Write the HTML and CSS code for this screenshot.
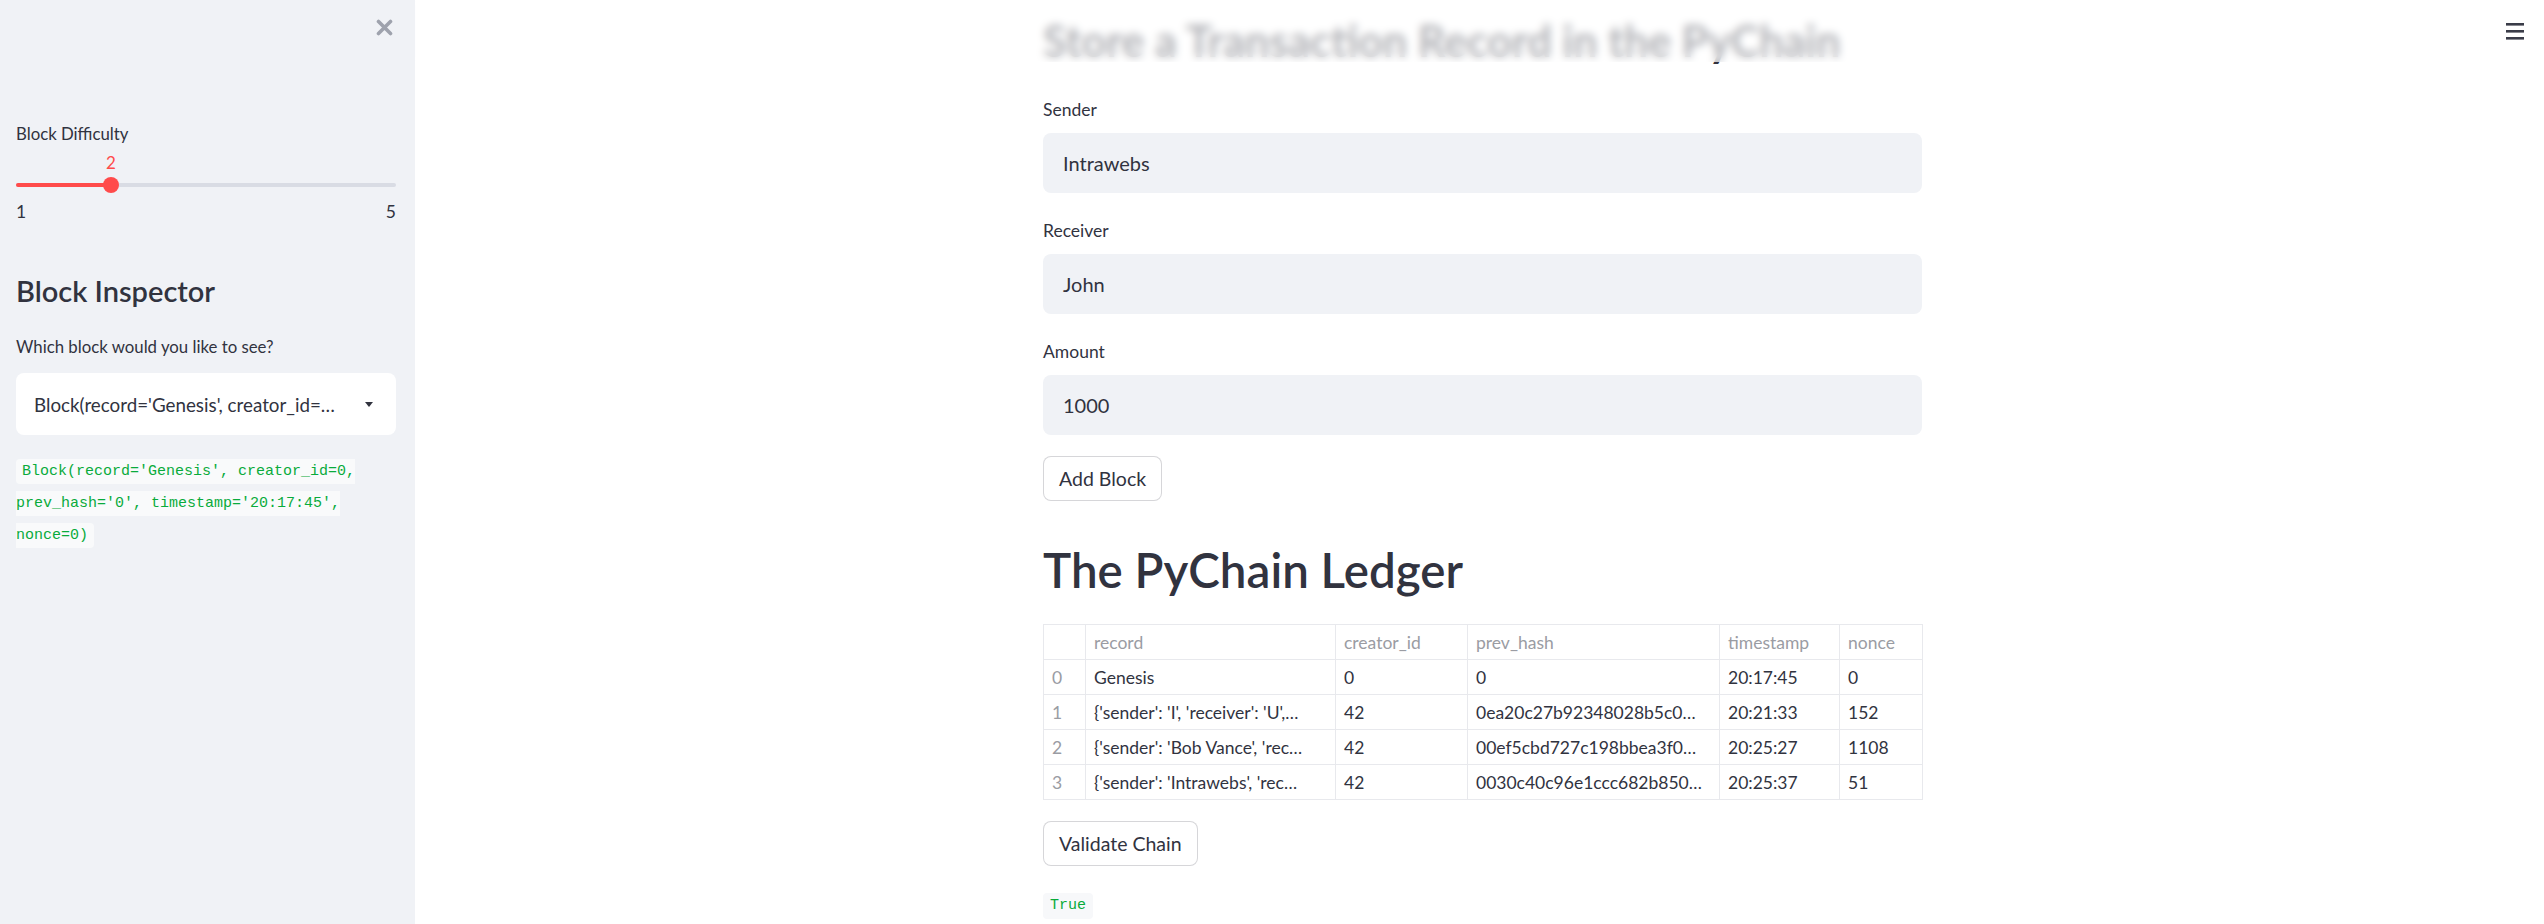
FILE: index.html
```html
<!DOCTYPE html>
<html lang="en">
<head>
<meta charset="utf-8">
<title>PyChain</title>
<link rel="stylesheet" href="styles.css">
</head>
<body>
<div class="app">
  <aside class="sidebar">
    <div class="sb-close">
      <svg width="17" height="17" viewBox="0 0 17 17"><path d="M2.5 2.5 L14.5 14.5 M14.5 2.5 L2.5 14.5" stroke="#9ea2ad" stroke-width="3.6" stroke-linecap="round"/></svg>
    </div>
    <div class="sb-label sb-label-diff">Block Difficulty</div>
    <div class="slider">
      <div class="slider-value" style="left:25%">2</div>
      <div class="track"><div class="track-fill" style="width:25%"></div></div>
      <div class="thumb" style="left:25%"></div>
      <div class="minmax"><span>1</span><span>5</span></div>
    </div>
    <h2 class="sb-heading">Block Inspector</h2>
    <div class="sb-label sb-label-select">Which block would you like to see?</div>
    <div class="select">
      <span>Block(record='Genesis', creator_id=…</span>
      <span class="caret"></span>
    </div>
    <p class="sb-code"><code>Block(record='Genesis', creator_id=0, prev_hash='0', timestamp='20:17:45', nonce=0)</code></p>
  </aside>
  <main class="main">
    <div class="block">
      <h1 class="title">Store a Transaction Record in the PyChain</h1>
      <div class="field">
        <div class="field-label">Sender</div>
        <div class="input">Intrawebs</div>
      </div>
      <div class="field">
        <div class="field-label">Receiver</div>
        <div class="input">John</div>
      </div>
      <div class="field">
        <div class="field-label">Amount</div>
        <div class="input">1000</div>
      </div>
      <button class="btn btn-add">Add Block</button>
      <h2 class="ledger">The PyChain Ledger</h2>
      <table class="grid">
        <colgroup>
          <col class="c-idx"><col class="c-rec"><col class="c-cre"><col class="c-hash"><col class="c-ts"><col class="c-nonce">
        </colgroup>
        <thead>
          <tr><th></th><th>record</th><th>creator_id</th><th>prev_hash</th><th>timestamp</th><th>nonce</th></tr>
        </thead>
        <tbody>
          <tr><td class="idx">0</td><td>Genesis</td><td>0</td><td>0</td><td>20:17:45</td><td>0</td></tr>
          <tr><td class="idx">1</td><td>{'sender': 'I', 'receiver': 'U',…</td><td>42</td><td>0ea20c27b92348028b5c0…</td><td>20:21:33</td><td>152</td></tr>
          <tr><td class="idx">2</td><td>{'sender': 'Bob Vance', 'rec…</td><td>42</td><td>00ef5cbd727c198bbea3f0…</td><td>20:25:27</td><td>1108</td></tr>
          <tr><td class="idx">3</td><td>{'sender': 'Intrawebs', 'rec…</td><td>42</td><td>0030c40c96e1ccc682b850…</td><td>20:25:37</td><td>51</td></tr>
        </tbody>
      </table>
      <button class="btn btn-validate">Validate Chain</button>
      <div class="result"><code>True</code></div>
    </div>
  </main>
</div>
<header class="topbar">
  <svg width="18" height="17" viewBox="0 0 18 17"><rect x="0" y="0" width="18" height="2.6" fill="#3a3c48"/><rect x="0" y="7" width="18" height="2.6" fill="#3a3c48"/><rect x="0" y="14" width="18" height="2.6" fill="#3a3c48"/></svg>
</header>
</body>
</html>
```
FILE: styles.css
```css
* { box-sizing: border-box; }
html, body { margin: 0; padding: 0; }
body {
  width: 2544px;
  height: 924px;
  overflow: hidden;
  position: relative;
  background: #ffffff;
  color: #31333f;
  font-family: "Lato", "Open Sans", sans-serif;
}
.app { display: flex; height: 924px; }

/* Sidebar */
.sidebar {
  width: 415px;
  flex: none;
  background: #f0f2f6;
  padding: 19px 19px 0 16px;
  display: flex;
  flex-direction: column;
}
.sb-close { display: flex; justify-content: flex-end; padding-right: 3px; height: 17px; }
.sb-label { font-size: 16.8px; line-height: 22px; }
.sb-label-diff { margin-top: 87px; }
.slider { position: relative; height: 76px; }
.slider-value {
  position: absolute;
  top: 7px;
  transform: translateX(-50%);
  color: #ff4b4b;
  font-size: 17px;
  line-height: 22px;
}
.track {
  margin-top: 38px;
  height: 4px;
  border-radius: 2px;
  background: #d9dce4;
  overflow: hidden;
}
.track-fill { height: 4px; background: #ff4b4b; }
.thumb {
  position: absolute;
  top: 32px;
  width: 16px;
  height: 16px;
  margin-left: -8px;
  border-radius: 50%;
  background: #ff4b4b;
}
.minmax {
  margin-top: 14px;
  display: flex;
  justify-content: space-between;
  font-size: 17.5px;
  line-height: 22px;
}
.sb-heading { margin: 52px 0 0; font-size: 29px; line-height: 36px; font-weight: 600; }
.sb-label-select { margin-top: 27px; }
.select {
  margin-top: 15px;
  height: 62px;
  background: #ffffff;
  border-radius: 8px;
  display: flex;
  align-items: center;
  justify-content: space-between;
  padding: 0 23px 0 18px;
  font-size: 18.8px;
}
.caret {
  width: 0; height: 0;
  border-left: 4.5px solid transparent;
  border-right: 4.5px solid transparent;
  border-top: 5px solid #31333f;
}
.sb-code {
  margin: 21px 0 0;
  font-family: "Liberation Mono", "DejaVu Sans Mono", monospace;
  font-size: 15px;
  line-height: 32px;
}
.sb-code code, .result code {
  font-family: "Liberation Mono", "DejaVu Sans Mono", monospace;
  font-size: 15px;
  line-height: 18px;
  color: #09ab3b;
  background: #f9fafb;
  padding: 4px 6px;
  border-radius: 4px;
}

/* Main */
.main { flex: 1; display: flex; justify-content: center; padding-left: 6px; }
.block { width: 879px; padding-top: 8px; display: flex; flex-direction: column; }
.title { margin: 0 0 22px; font-size: 43px; line-height: 66px; font-weight: 700; white-space: nowrap; }
.field + .field { margin-top: 24px; }
.field-label { font-size: 17.5px; line-height: 28px; }
.input {
  margin-top: 9px;
  height: 60px;
  background: #f0f2f6;
  border-radius: 8px;
  padding-left: 20px;
  display: flex;
  align-items: center;
  font-size: 20px;
}
.btn {
  align-self: flex-start;
  height: 45px;
  padding: 0 15px;
  background: #ffffff;
  border: 1px solid rgba(49, 51, 63, 0.2);
  border-radius: 8px;
  font-family: inherit;
  font-size: 19.5px;
  color: #31333f;
}
.btn-add { margin-top: 21px; }
.ledger { margin: 41px 0 0; font-size: 47.5px; line-height: 56px; font-weight: 600; }
.grid {
  margin-top: 26px;
  width: 879px;
  border-collapse: collapse;
  table-layout: fixed;
  font-size: 17.5px;
}
.c-idx { width: 42px; }
.c-rec { width: 250px; }
.c-cre { width: 132px; }
.c-hash { width: 252px; }
.c-ts { width: 120px; }
.c-nonce { width: 83px; }
.grid th, .grid td {
  border: 1px solid #e8e9ed;
  height: 35px;
  padding: 0 8px;
  text-align: left;
  white-space: nowrap;
  overflow: hidden;
}
.grid th { font-weight: 400; color: #9a9ca3; }
.grid td.idx { color: #9a9ca3; }
.btn-validate { margin-top: 21px; }
.result { margin-top: 24px; line-height: 26px; }
.result code { display: inline-block; line-height: 26px; padding: 0 7px; background: #f7f8fa; }

/* Header overlay */
.topbar {
  position: absolute;
  top: 0;
  left: 415px;
  right: 0;
  height: 62px;
  background: rgba(255, 255, 255, 0.62);
  backdrop-filter: blur(4px);
  display: flex;
  justify-content: flex-end;
  padding: 23px 20px 0 0;
}
```
